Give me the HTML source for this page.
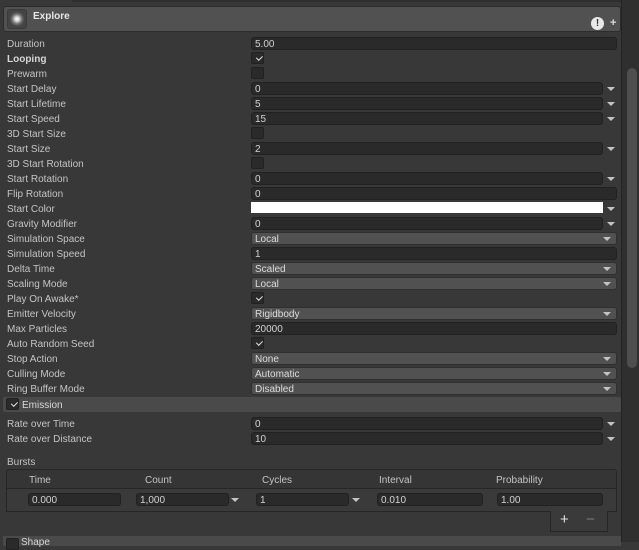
<!DOCTYPE html>
<html><head><meta charset="utf-8"><style>
*{margin:0;padding:0;box-sizing:border-box}
body{width:639px;height:542px;background:#383838;font-family:"Liberation Sans",sans-serif;font-size:10px;color:#c4c4c4;position:relative;overflow:hidden}
.a{position:absolute}
.l{position:absolute;left:7px;height:15px;line-height:15px;padding-top:1px;white-space:nowrap}
.f{position:absolute;left:251px;height:13px;background:#2a2a2a;border:1px solid #212121;border-radius:3px;line-height:13px;padding-left:3px;color:#d2d2d2}
.full{width:366px}.cur{width:352px}
.p{position:absolute;left:251px;width:366px;height:13px;background:#515151;border:1px solid #2f2f2f;border-radius:3px;line-height:13px;padding-left:3px;color:#dcdcdc}
.p:after{content:"";position:absolute;right:5px;top:4px;border-left:4px solid transparent;border-right:4px solid transparent;border-top:4px solid #c4c4c4}
.ar{position:absolute;left:607px;width:0;height:0;border-left:4px solid transparent;border-right:4px solid transparent;border-top:4px solid #c4c4c4}
.cb{position:absolute;left:251px;width:13px;height:12px;background:#2a2a2a;border:1px solid #212121;border-radius:2px}
.ck:after{content:"";position:absolute;left:3px;top:1px;width:5px;height:3px;border-left:1px solid #e0e0e0;border-bottom:1px solid #e0e0e0;transform:rotate(-45deg) translate(0px,2px)}
</style></head><body>
<div class="a" style="left:72px;top:0;width:549px;height:2px;background:#2e2e2e"></div>
<div class="a" style="left:621px;top:0;width:1px;height:542px;background:#232323"></div>
<div class="a" style="left:622px;top:0;width:17px;height:542px;background:#2f2f2f"></div>
<div class="a" style="left:627px;top:68px;width:10px;height:300px;background:#4e4e4e;border-radius:5px"></div>
<div class="a" style="left:3px;top:6px;width:618px;height:26px;background:#515151;border:1px solid #2c2c2c;border-radius:3px"></div>
<div class="a" style="left:7px;top:9px;width:20px;height:20px;background:#444;border-radius:3px;border:1px solid #3a3a3a"></div>
<div class="a" style="left:10px;top:12px;width:14px;height:14px;border-radius:50%;background:radial-gradient(circle,#fff 0,#ddd 20%,rgba(180,180,180,.4) 50%,rgba(80,80,80,0) 75%)"></div>
<div class="a" style="left:33px;top:11px;font-weight:bold;color:#e6e6e6;font-size:10px">Explore</div>
<div class="a" style="left:591px;top:17px;width:13px;height:13px;border-radius:50%;background:#e8e8e8;color:#333;font-weight:bold;font-size:10px;line-height:13px;text-align:center">!</div>
<div class="a" style="left:610px;top:17px;color:#ddd;font-weight:bold;font-size:11px">+</div>

<div class="l" style="top:36px">Duration</div><div class="f full" style="top:37px">5.00</div>
<div class="l" style="top:51px;font-weight:bold;color:#d6d6d6">Looping</div><div class="cb ck" style="top:52px"></div>
<div class="l" style="top:66px">Prewarm</div><div class="cb" style="top:67px"></div>
<div class="l" style="top:81px">Start Delay</div><div class="f cur" style="top:82px">0</div><div class="ar" style="top:87px"></div>
<div class="l" style="top:96px">Start Lifetime</div><div class="f cur" style="top:97px">5</div><div class="ar" style="top:102px"></div>
<div class="l" style="top:111px">Start Speed</div><div class="f cur" style="top:112px">15</div><div class="ar" style="top:117px"></div>
<div class="l" style="top:126px">3D Start Size</div><div class="cb" style="top:127px"></div>
<div class="l" style="top:141px">Start Size</div><div class="f cur" style="top:142px">2</div><div class="ar" style="top:147px"></div>
<div class="l" style="top:156px">3D Start Rotation</div><div class="cb" style="top:157px"></div>
<div class="l" style="top:171px">Start Rotation</div><div class="f cur" style="top:172px">0</div><div class="ar" style="top:177px"></div>
<div class="l" style="top:186px">Flip Rotation</div><div class="f full" style="top:187px">0</div>
<div class="l" style="top:201px">Start Color</div><div class="a" style="left:251px;top:202px;width:352px;height:11px;background:#fff"></div><div class="ar" style="top:207px"></div>
<div class="l" style="top:216px">Gravity Modifier</div><div class="f cur" style="top:217px">0</div><div class="ar" style="top:222px"></div>
<div class="l" style="top:231px">Simulation Space</div><div class="p" style="top:232px">Local</div>
<div class="l" style="top:246px">Simulation Speed</div><div class="f full" style="top:247px">1</div>
<div class="l" style="top:261px">Delta Time</div><div class="p" style="top:262px">Scaled</div>
<div class="l" style="top:276px">Scaling Mode</div><div class="p" style="top:277px">Local</div>
<div class="l" style="top:291px">Play On Awake*</div><div class="cb ck" style="top:292px"></div>
<div class="l" style="top:306px">Emitter Velocity</div><div class="p" style="top:307px">Rigidbody</div>
<div class="l" style="top:321px">Max Particles</div><div class="f full" style="top:322px">20000</div>
<div class="l" style="top:336px">Auto Random Seed</div><div class="cb ck" style="top:337px"></div>
<div class="l" style="top:351px">Stop Action</div><div class="p" style="top:352px">None</div>
<div class="l" style="top:366px">Culling Mode</div><div class="p" style="top:367px">Automatic</div>
<div class="l" style="top:381px">Ring Buffer Mode</div><div class="p" style="top:382px">Disabled</div>

<div class="a" style="left:3px;top:397px;width:618px;height:15px;background:#4a4a4a;border-radius:2px"></div>
<div class="cb ck" style="left:6px;top:398px"></div>
<div class="a" style="left:22px;top:398px;line-height:15px;color:#d8d8d8">Emission</div>
<div class="l" style="top:416px">Rate over Time</div><div class="f cur" style="top:417px">0</div><div class="ar" style="top:422px"></div>
<div class="l" style="top:431px">Rate over Distance</div><div class="f cur" style="top:432px">10</div><div class="ar" style="top:437px"></div>
<div class="l" style="top:454px">Bursts</div>
<div class="a" style="left:6px;top:469px;width:611px;height:20px;background:#353535;border:1px solid #262626;border-radius:3px 3px 0 0"></div>
<div class="a" style="left:29px;top:475px">Time</div>
<div class="a" style="left:145px;top:475px">Count</div>
<div class="a" style="left:262px;top:475px">Cycles</div>
<div class="a" style="left:379px;top:475px">Interval</div>
<div class="a" style="left:496px;top:475px">Probability</div>
<div class="a" style="left:6px;top:489px;width:611px;height:23px;background:#3a3a3a;border:1px solid #262626;border-top:none"></div>
<div class="f" style="left:28px;top:493px;width:93px">0.000</div>
<div class="f" style="left:136px;top:493px;width:93px">1,000</div><div class="ar" style="left:231px;top:498px"></div>
<div class="f" style="left:256px;top:493px;width:93px">1</div><div class="ar" style="left:352px;top:498px"></div>
<div class="f" style="left:377px;top:493px;width:106px">0.010</div>
<div class="f" style="left:497px;top:493px;width:106px">1.00</div>
<div class="a" style="left:550px;top:511px;width:58px;height:21px;background:#3a3a3a;border:1px solid #262626;border-top:none"></div>
<div class="a" style="left:560px;top:511px;font-size:15px;color:#e0e0e0">+</div>
<div class="a" style="left:586px;top:511px;font-size:15px;color:#7a7a7a">−</div>
<div class="a" style="left:3px;top:536px;width:618px;height:10px;background:#4a4a4a"></div>
<div class="cb" style="left:6px;top:538px"></div>
<div class="a" style="left:21px;top:537px;color:#d8d8d8">Shape</div>
</body></html>
